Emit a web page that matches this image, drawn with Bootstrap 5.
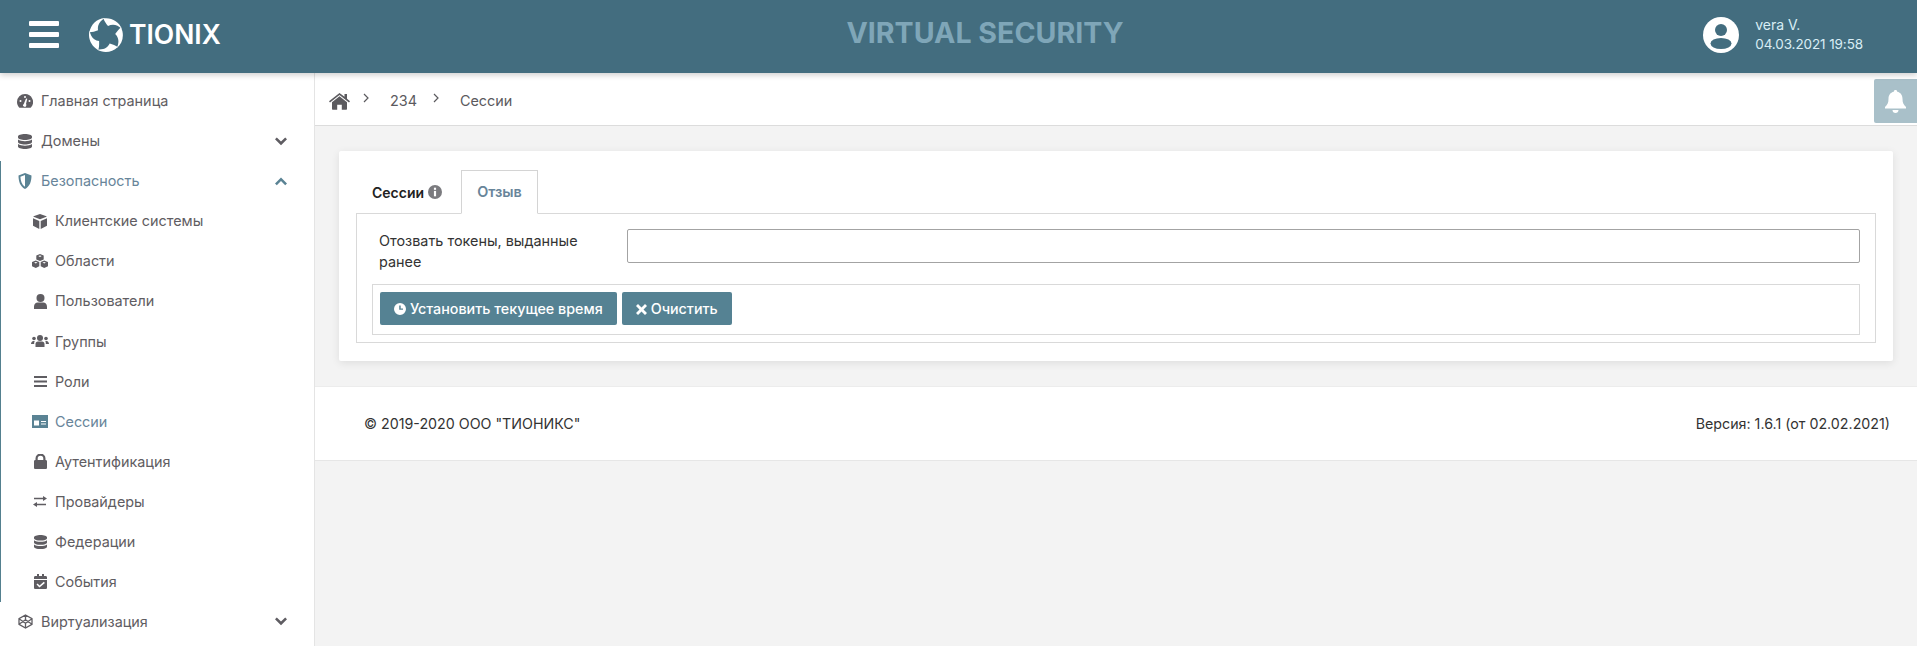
<!DOCTYPE html>
<html lang="ru">
<head>
<meta charset="utf-8">
<title>Virtual Security</title>
<link href="https://cdn.jsdelivr.net/npm/bootstrap@5.3.0/dist/css/bootstrap.min.css" rel="stylesheet">
<style>
html,body{height:646px;overflow:hidden}
body{font-family:Inter,"Liberation Sans",sans-serif;font-size:14.4px;color:#333;background:#f3f3f3}
.topbar{height:73px;background:#436d7f;box-shadow:0 2px 6px rgba(0,0,0,.2);position:relative;z-index:3}
.burger{width:30px;margin-left:29px;margin-right:30px}
.burger span{display:block;height:5px;background:#fff;margin-bottom:6px;border-radius:1px}
.burger span:last-child{margin-bottom:0}
.brand-word{font-size:26.5px;font-weight:600;color:#fff;margin-left:6px;line-height:1}
.app-title{position:absolute;left:0;right:0;top:0;height:73px;line-height:65px;text-align:center;font-size:28.6px;font-weight:700;color:#7fa6b8;padding-left:53px}
.user-box{margin-right:54px;color:#d9edf5;font-size:14px}
.user-date{font-size:13.5px;letter-spacing:-.1px}
.user-name{line-height:19px}
.sidebar{width:314px;height:573px;background:#fff;flex:none;padding-top:8px;overflow:hidden}
.side-row{height:40.05px;padding-left:17px;padding-right:27px;color:#5f5d62;font-size:14.4px}
.side-row svg{fill:#5f5d62}
.side-row .ico{width:16px;flex:none;margin-right:8px;display:flex;justify-content:center}
.side-sub{padding-left:31px}
.side-sub .ico{width:18px;margin-right:6px}
.side-group{border-left:1px solid #54808f}
.side-group>.side-row:first-child{padding-left:16px}
.side-group .side-sub{padding-left:30px}
.side-act{color:#68859a}
.side-act svg{fill:#5a8394}
.chev{margin-left:auto;display:flex}
.main-col{flex:1 1 auto;min-width:0;border-left:1px solid #e4e4e4}
.crumbs{height:53px;background:#fff;border-bottom:1px solid #dcdcdc;padding:4px 0 0 14px;color:#5b5a5e;position:relative;font-size:14.4px}
.crumb-sep{margin:0 21px 6px 13px;display:flex}
.crumb-sep.two{margin-left:16px;margin-right:21px}
.bell-btn{position:absolute;right:0;top:6px;width:43px;height:44px;background:#a9c0c9;border-radius:2px 0 0 2px}
.panel{margin:25px 24px 25px 24px;height:210px;background:#fff;box-shadow:0 2px 8px rgba(0,0,0,.09);border-radius:2px;padding:19px 17px 18px 17px}
.tab-row{height:44px;position:relative;z-index:1;margin-bottom:-1px}
.tab-plain{padding-left:16px;width:105px;font-weight:600;color:#222;font-size:14px}
.tab-on{width:77px;height:44px;border:1px solid #d4d4d4;border-bottom-color:#fff;background:#fff;text-align:center;color:#68859a;font-weight:600;font-size:14.4px;line-height:42px}
.tab-body{border:1px solid #d9d9d9;height:130px;padding:15px}
.field-label{width:255px;padding-left:7px;padding-right:30px;line-height:21px;flex:none;color:#333;margin-top:1px;font-size:14.4px}
.field-input{flex:1 1 auto;height:34px;border:1px solid #a3a3a3;border-radius:2px;background:#fff}
.btn-line{border:1px solid #d9d9d9;height:51px;margin-top:12px;padding:7px;gap:5px}
.act-btn{height:33px;background:#558293;color:#fff;border:0;border-radius:2px;font-size:14.3px;font-weight:500;padding:0 14px;--bs-btn-hover-bg:#558293;--bs-btn-hover-color:#fff}
.act-btn svg{fill:#fff;margin-right:4px;vertical-align:-1px}
.foot{height:75px;background:#fff;border-top:1px solid #ececec;border-bottom:1px solid #e6e6e6;padding:0 27px 0 49px;font-size:14.25px;color:#333}
</style>
</head>
<body>
<header class="topbar d-flex align-items-center pb-1">
  <div class="burger"><span></span><span></span><span></span></div>
  <svg width="34" height="34" viewBox="0 0 34 34" fill="#fff">
    <defs><path id="leaf" d="M14.500.4C22.500-.8 30 3.500 33 11c-3-2.800-6-4.300-9-4.300-1.700 0-3.300.4-5 1.300C17 5.500 15.300 3 14.500.4z"/></defs>
    <use href="#leaf"/><use href="#leaf" transform="rotate(72 17 17)"/><use href="#leaf" transform="rotate(144 17 17)"/><use href="#leaf" transform="rotate(216 17 17)"/><use href="#leaf" transform="rotate(288 17 17)"/>
  </svg>
  <span class="brand-word">TIONIX</span>
  <div class="app-title">VIRTUAL SECURITY</div>
  <div class="user-box ms-auto d-flex align-items-center gap-3 position-relative">
    <svg width="36" height="36" viewBox="0 0 36 36"><circle cx="18" cy="18" r="18" fill="#fff"/><circle cx="18" cy="13" r="6" fill="#436d7f"/><ellipse cx="18" cy="26.500" rx="10.500" ry="5.500" fill="#436d7f"/></svg>
    <div><div class="user-name">vera V.</div><div class="user-date">04.03.2021 19:58</div></div>
  </div>
</header>
<div class="d-flex">
  <nav class="sidebar">
    <div class="side-row d-flex align-items-center"><span class="ico"><svg width="16" height="14" viewBox="0 0 16 14"><path d="M8 0a8 8 0 0 0-8 8c0 2 .7 3.800 1.900 5.200.3.400.8.600 1.200.6h9.800c.5 0 .9-.2 1.200-.6A8 8 0 0 0 8 0zm0 2a1 1 0 1 1 0 2 1 1 0 0 1 0-2zM3.500 8a1 1 0 1 1 0-2 1 1 0 0 1 0 2zm5.800 3.600a1.600 1.600 0 1 1-2.500-1.700L8.800 5a.7.700 0 1 1 1.300.5L9 10a1.600 1.600 0 0 1 .3 1.600zM12.500 8a1 1 0 1 1 0-2 1 1 0 0 1 0 2z"/></svg></span>Главная страница</div>
    <div class="side-row d-flex align-items-center"><span class="ico"><svg width="14" height="15" viewBox="0 0 14 15"><path d="M7 0c3.900 0 7 1.100 7 2.500v1C14 4.900 10.900 6 7 6S0 4.900 0 3.500v-1C0 1.100 3.100 0 7 0zM0 5.600C1.500 6.800 4.300 7.300 7 7.300s5.500-.5 7-1.700v2.400C14 9.400 10.900 10.500 7 10.500S0 9.400 0 8zM0 10.100c1.500 1.200 4.300 1.700 7 1.700s5.500-.5 7-1.700v2.400C14 13.900 10.900 15 7 15s-7-1.100-7-2.500z"/></svg></span>Домены<span class="chev"><svg width="12" height="9" viewBox="0 0 12 9"><path d="M0 2.200 1.800.4 6 4.600 10.200.4 12 2.200 6 8.200z"/></svg></span></div>
    <div class="side-group">
      <div class="side-row side-act d-flex align-items-center"><span class="ico"><svg width="14" height="16" viewBox="0 0 14 16"><path d="M7 0 .5 2.500C.5 8 2 13.500 7 16c5-2.500 6.500-8 6.500-13.500zm0 2v11.700C3.800 11.800 2.600 8 2.400 3.800z"/></svg></span>Безопасность<span class="chev"><svg width="12" height="9" viewBox="0 0 12 9"><path d="M0 6.400 1.800 8.200 6 4l4.200 4.200L12 6.400 6 .4z"/></svg></span></div>
      <div class="side-row side-sub d-flex align-items-center"><span class="ico"><svg width="14" height="15" viewBox="0 0 14 15"><path d="M7 0 .5 2.300v.4L7 5.300l6.500-2.600v-.4zM0 4.200v7.600L6.300 15V7zM14 4.200 7.700 7v8l6.300-3.200z"/></svg></span>Клиентские системы</div>
      <div class="side-row side-sub d-flex align-items-center"><span class="ico"><svg width="16" height="14" viewBox="0 0 16 14"><path fill-rule="evenodd" d="M8 0 4.300 1.500v3.900L8 7l3.700-1.600V1.500zM8 1.400l1.800.7L8 2.900l-1.800-.8zM3.800 6.500 0 8.100v4.100L3.800 14l3.500-1.800V8.100zm0 1.400 1.700.7-1.700.8-1.700-.8zM12.200 6.500 8.700 8.100v4.100L12.200 14 16 12.200V8.100zm0 1.400 1.700.7-1.700.8-1.700-.8z"/></svg></span>Области</div>
      <div class="side-row side-sub d-flex align-items-center"><span class="ico"><svg width="13" height="15" viewBox="0 0 13 15"><circle cx="6.500" cy="4" r="4"/><path d="M0 15v-2.500C0 10 2 8.500 3.500 8.500h6c1.500 0 3.500 1.500 3.500 4V15z"/></svg></span>Пользователи</div>
      <div class="side-row side-sub d-flex align-items-center"><span class="ico"><svg width="18" height="12" viewBox="0 0 18 12"><circle cx="9" cy="3" r="3"/><circle cx="3" cy="3.500" r="1.800"/><circle cx="15" cy="3.500" r="1.800"/><path d="M4.500 12V9c0-1.500 1-2.500 2.500-2.500h4c1.500 0 2.500 1 2.500 2.500v3zM0 9c0-1.500 1-3 2.500-3h1.300C3 7 3.200 8.500 3.200 9H0zM18 9c0-1.500-1-3-2.500-3h-1.300c.8 1 .6 2.500.6 3z"/></svg></span>Группы</div>
      <div class="side-row side-sub d-flex align-items-center"><span class="ico"><svg width="13" height="11" viewBox="0 0 13 11"><rect width="13" height="2"/><rect y="4.500" width="13" height="2"/><rect y="9" width="13" height="2"/></svg></span>Роли</div>
      <div class="side-row side-sub side-act d-flex align-items-center"><span class="ico"><svg width="16" height="13" viewBox="0 0 16 13"><path fill-rule="evenodd" d="M0 0h16v13H0zm2 5.500v5h5v-5zM9 6v1h5V6zm0 2.500v1h5v-1z"/></svg></span>Сессии</div>
      <div class="side-row side-sub d-flex align-items-center"><span class="ico"><svg width="13" height="15" viewBox="0 0 13 15"><path fill-rule="evenodd" d="M1.500 6V4.500a5 5 0 0 1 10 0V6h.2c.7 0 1.300.6 1.300 1.300v6.400c0 .7-.6 1.300-1.300 1.300H1.300C.6 15 0 14.400 0 13.700V7.300C0 6.600.6 6 1.300 6zm2.200 0h5.600V4.500a2.800 2.800 0 0 0-5.600 0z"/></svg></span>Аутентификация</div>
      <div class="side-row side-sub d-flex align-items-center"><span class="ico"><svg width="14" height="11" viewBox="0 0 14 11"><path d="M10 0l4 2.500L10 5V3.300H1V1.700h9zM4 6v1.700h9v1.600H4V11L0 8.500z"/></svg></span>Провайдеры</div>
      <div class="side-row side-sub d-flex align-items-center"><span class="ico"><svg width="13" height="14" viewBox="0 0 14 15"><path d="M7 0c3.900 0 7 1.100 7 2.500v1C14 4.900 10.900 6 7 6S0 4.900 0 3.500v-1C0 1.100 3.100 0 7 0zM0 5.600C1.500 6.800 4.300 7.300 7 7.300s5.500-.5 7-1.700v2.400C14 9.400 10.900 10.500 7 10.500S0 9.400 0 8zM0 10.100c1.500 1.200 4.300 1.700 7 1.700s5.500-.5 7-1.700v2.400C14 13.900 10.900 15 7 15s-7-1.100-7-2.500z"/></svg></span>Федерации</div>
      <div class="side-row side-sub d-flex align-items-center"><span class="ico"><svg width="13" height="15" viewBox="0 0 13 15"><path fill-rule="evenodd" d="M3 0h2v2h3V0h2v2h1.700c.7 0 1.300.6 1.300 1.300V5H0V3.300C0 2.600.6 2 1.300 2H3zM0 6h13v7.700c0 .7-.6 1.300-1.300 1.300H1.300C.6 15 0 14.400 0 13.700zm9.800 1.800L5.600 11.500 3.500 9.600l-1 1 3 3 5.400-4.700z"/></svg></span>События</div>
    </div>
    <div class="side-row d-flex align-items-center"><span class="ico"><svg width="15" height="15" viewBox="0 0 15 15"><path fill="none" stroke="#5f5d62" stroke-width="1.300" d="M7.500 1 14 4.700v5.600L7.500 14 1 10.300V4.700zM1 4.700l6.500 4.500L14 4.700M7.500 9.200V14M1 10.300l6.500-4.500 6.500 4.500M7.500 1v4.800"/></svg></span>Виртуализация<span class="chev"><svg width="12" height="9" viewBox="0 0 12 9"><path d="M0 2.200 1.800.4 6 4.600 10.200.4 12 2.200 6 8.200z"/></svg></span></div>
  </nav>
  <main class="main-col">
    <div class="crumbs d-flex align-items-center">
      <svg width="21" height="17" viewBox="0 0 21 17" fill="#5b5a5e"><path d="M10.500 3.200 3 9.300V16c0 .4.300.7.700.7h4.500v-4.900h4.600v4.900h4.500c.4 0 .7-.3.700-.7V9.300zM21 8.300l-3-2.500V1h-2.500v2.700L10.500 0 0 8.300l1 1.200 9.500-7.600L20 9.500z"/></svg>
      <span class="crumb-sep"><svg width="6" height="10" viewBox="0 0 6 10"><path fill="none" stroke="#5b5a5e" stroke-width="1.200" d="M1 1l4 4-4 4"/></svg></span>
      <span>234</span>
      <span class="crumb-sep two"><svg width="6" height="10" viewBox="0 0 6 10"><path fill="none" stroke="#5b5a5e" stroke-width="1.200" d="M1 1l4 4-4 4"/></svg></span>
      <span>Сессии</span>
      <div class="bell-btn d-flex align-items-center justify-content-center"><svg width="21" height="23" viewBox="0 0 21 23" fill="#fff"><path d="M10.500 0c1 0 1.700.7 1.700 1.700 3.500.7 5.300 3.500 5.300 7 0 4 1 6 3.500 8.300v1.500H0V17c2.500-2.300 3.500-4.300 3.500-8.300 0-3.500 1.800-6.300 5.300-7C8.800.7 9.500 0 10.500 0zM7.500 20h6c0 1.700-1.300 3-3 3s-3-1.300-3-3z"/></svg></div>
    </div>
    <section class="panel">
      <div class="tab-row d-flex">
        <div class="tab-plain d-flex align-items-center">Сессии<svg class="ms-1" width="14" height="14" viewBox="0 0 13 13"><circle cx="6.500" cy="6.500" r="6.500" fill="#7b7b7f"/><rect x="5.500" y="5.500" width="2" height="5" fill="#fff"/><rect x="5.500" y="2.500" width="2" height="2" fill="#fff"/></svg></div>
        <div class="tab-on">Отзыв</div>
      </div>
      <div class="tab-body">
        <div class="d-flex align-items-start">
          <div class="field-label">Отозвать токены, выданные ранее</div>
          <div class="field-input"></div>
        </div>
        <div class="btn-line d-flex">
          <button type="button" class="btn act-btn"><svg width="12" height="12" viewBox="0 0 12 12"><path fill-rule="evenodd" d="M6 0a6 6 0 1 1 0 12A6 6 0 0 1 6 0zm-.8 2.500v4.300H9V5.500H6.700v-3z"/></svg>Установить текущее время</button>
          <button type="button" class="btn act-btn"><svg width="11" height="11" viewBox="0 0 11 11"><path d="M2 0l3.500 3.500L9 0l2 2-3.500 3.500L11 9l-2 2-3.500-3.500L2 11 0 9l3.500-3.500L0 2z"/></svg>Очистить</button>
        </div>
      </div>
    </section>
    <footer class="foot d-flex align-items-center justify-content-between">
      <span>© 2019-2020 ООО "ТИОНИКС"</span>
      <span>Версия: 1.6.1 (от 02.02.2021)</span>
    </footer>
  </main>
</div>
<script src="https://cdn.jsdelivr.net/npm/bootstrap@5.3.0/dist/js/bootstrap.bundle.min.js"></script>
</body>
</html>
